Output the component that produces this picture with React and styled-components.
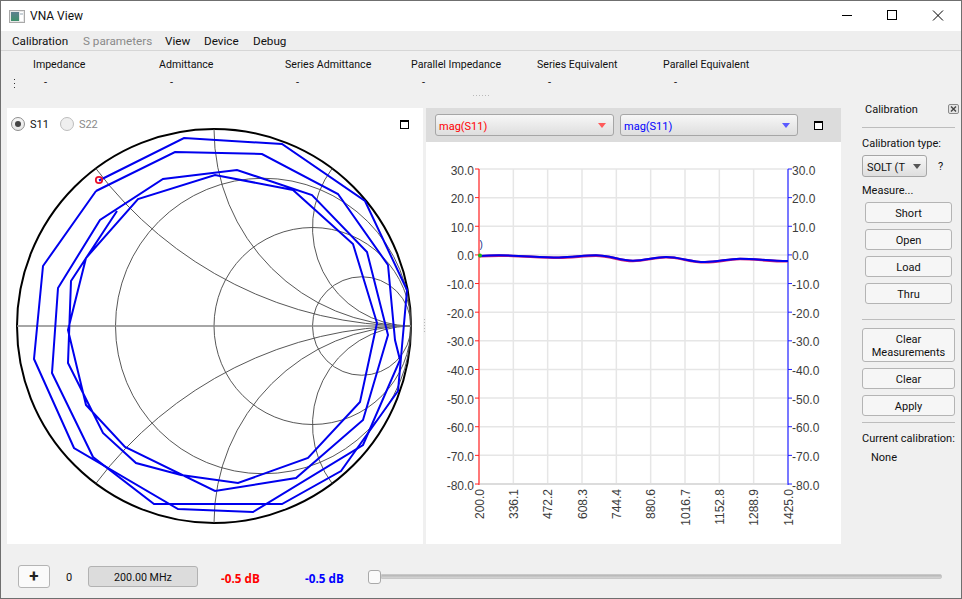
import React from "react";
import styled, { createGlobalStyle } from "styled-components";

const Global = createGlobalStyle`
  html, body { margin: 0; padding: 0; background: #f0f0f0; }
  body { font-family: Roboto, "Liberation Sans", sans-serif; font-size: 11px; color: #111; }
`;

const Win = styled.div`
  box-sizing: border-box; width: 962px; height: 599px; border: 1px solid #6f6f6f;
  background: #f0f0f0; display: flex; flex-direction: column; overflow: hidden;
`;
const TitleBar = styled.div`
  height: 30px; flex: none; background: #fff; display: flex; align-items: center; padding-left: 8px;
`;
const Title = styled.span`margin-left: 5px; font-size: 12px; flex: 1;`;
const WinBtn = styled.svg`width: 46px; height: 30px; display: block; flex: none;`;
const MenuBar = styled.div`
  height: 19px; flex: none; background: #eeeeee; border-bottom: 1px solid #d6d6d6; padding-left: 11px;
  display: grid; grid-template-columns: 71px 82px 39px 49px 1fr; align-items: center; font-size: 11.7px;
`;
const MenuItem = styled.span`color: ${p => (p.$off ? "#8a8a8a" : "#111")};`;
const Workspace = styled.div`flex: 1; display: flex; min-height: 0;`;
const LeftCol = styled.div`width: 840px; flex: none; display: flex; flex-direction: column;`;
const InfoBar = styled.div`height: 37px; flex: none; padding: 5px 0 0 13px; box-sizing: content-box; display: flex; font-size: 10.6px;`;
const Grip = styled.div`
  width: 1px; height: 10px; margin: 23px 18px 0 0;
  background: repeating-linear-gradient(180deg, #333 0 1px, transparent 1px 4px);
`;
const InfoCol = styled.div`width: 126px; flex: none; line-height: 18px;`;
const InfoValue = styled.div`padding-left: 11px; line-height: 18px; font-size: 11px;`;
const HDots = styled.div`
  width: 17px; height: 1px; margin: 0 0 12px 472px; flex: none;
  background: repeating-linear-gradient(90deg, #b9b9b9 0 1px, transparent 1px 3px);
`;
const Panes = styled.div`height: 436px; flex: none; display: flex; padding-left: 6px;`;
const LeftPane = styled.div`position: relative; width: 416px; flex: none; background: #fff;`;
const PaneChart = styled.svg`display: block;`;
const SmithHead = styled.div`
  position: absolute; top: 9px; left: 4px; right: 14px; display: flex; align-items: center;
`;
const Radio = styled.span`
  box-sizing: border-box; width: 14px; height: 14px; border-radius: 50%; flex: none;
  border: 1px solid ${p => (p.$off ? "#bdbdbd" : "#8e8e8e")};
  background: ${p => (p.$off ? "#efefef" : "linear-gradient(#f6f6f6,#e6e6e6)")};
  display: flex; align-items: center; justify-content: center;
  &::after { content: ""; width: 6px; height: 6px; border-radius: 50%; background: ${p => (p.$off ? "transparent" : "#444")}; }
`;
const RadioText = styled.span`
  margin: 0 11px 0 5px; padding-top: 1px; color: ${p => (p.$off ? "#8a8a8a" : "#111")};
`;
const MaxIcon = styled.span`
  box-sizing: border-box; display: block; width: 9px; height: 9px; flex: none;
  border: 1px solid #000; border-top-width: 2px; background: #fff;
  margin: ${p => p.$m || "0"};
`;
const Spacer = styled.div`flex: 1;`;
const VSplit = styled.div`width: 3px; flex: none; display: flex; justify-content: center; padding-top: 211px; box-sizing: border-box;`;
const VDots = styled.div`
  width: 1px; height: 13px;
  background: repeating-linear-gradient(180deg, #b9b9b9 0 1px, transparent 1px 3px);
`;
const RightPane = styled.div`width: 415px; flex: none; background: #fff; display: flex; flex-direction: column;`;
const RightHead = styled.div`
  height: 34px; flex: none; background: #dcdcdc; box-sizing: border-box; padding: 6px 0 0 9px;
  display: flex; align-items: flex-start;
`;
const ComboText = styled.span`padding-top: 2px;`;
const Combo = styled.div`
  box-sizing: border-box; height: 22px; width: ${p => p.$w}; flex: none;
  margin-left: ${p => p.$ml || "0"}; padding: 0 ${p => p.$pr || "7px"} 0 ${p => p.$pl || "3px"};
  border: 1px solid #a6a6a6; border-radius: 3px;
  background: linear-gradient(#f7f7f7, #dedede);
  display: flex; align-items: center; justify-content: space-between;
  color: ${p => p.$color || "#111"};
  &::after {
    content: ""; width: 0; height: 0; border: 4px solid transparent; border-bottom: 0;
    border-top: 5px solid ${p => p.$arrow || "#555"};
  }
`;
const Dock = styled.div`flex: 1; box-sizing: border-box; padding: 53px 6px 0 21px; display: flex; flex-direction: column;`;
const DockHead = styled.div`display: flex; align-items: center; height: 10px; padding-left: 3px; justify-content: space-between; margin-right: -4px;`;
const DockClose = styled.svg`width: 11px; height: 10px; display: block;`;
const Sep = styled.div`height: 1px; background: #bdbdbd; flex: none; margin: ${p => p.$m};`;
const DockLabel = styled.div`line-height: 15px; padding-top: 1px; margin: ${p => p.$m || "0"};`;
const TypeRow = styled.div`display: flex; align-items: center; margin-top: 4px;`;
const Help = styled.span`margin-left: 11px;`;
const Btn = styled.div`
  box-sizing: border-box; flex: none; display: flex; align-items: center; justify-content: center; text-align: center;
  height: ${p => p.$h || "21px"}; margin: ${p => p.$m || "0"}; padding-top: 2px;
  border: 1px solid #b4b4b4; border-radius: 3px; background: #f6f6f6; line-height: 13px; color: #111;
`;
const Footer = styled.div`
  height: 54px; flex: none; box-sizing: border-box; padding: 21px 19px 0 17px; display: flex; align-items: flex-start;
`;
const PlusBtn = styled(Btn)`width: 32px; height: 23px; padding-top: 0; font-size: 17px; font-weight: 700; background: #fafafa; color: #222;`;
const Cell = styled.div`height: 23px; display: flex; align-items: center; flex: none; width: ${p => p.$w}; padding: 2px 0 0 ${p => p.$pl || "0"}; box-sizing: border-box;`;
const Freq = styled.div`
  box-sizing: border-box; width: 110px; height: 21px; margin-top: 1px; padding-top: 1px; flex: none; display: flex; align-items: center; justify-content: center;
  background: #dcdcdc; border: 1px solid #b2b2b2; border-radius: 3px; font-size: 10.7px;
`;
const Db = styled(Cell)`font-family: "Open Sans", sans-serif; font-weight: 700; font-size: 11.7px; color: ${p => p.$color}; margin-left: ${p => p.$ml || 0};`;
const Slider = styled.div`flex: 1; height: 23px; display: flex; align-items: center;`;
const Handle = styled.div`
  box-sizing: border-box; width: 13px; height: 14px; flex: none; background: #fafafa; border: 1px solid #a9a9a9; border-radius: 3px;
`;
const Groove = styled.div`
  flex: 1; height: 5px; background: linear-gradient(#b4b4b4, #d6d6d6); border: 1px solid #c8c8c8; box-sizing: border-box; border-radius: 0 2px 2px 0;
`;

const CX = 214, CY = 326, R = 197;
const pts = a => a.map(p => p.join(",")).join(" ");
const loopA = [[99,180.5],[184,138],[282,144],[365,201],[407,290],[398,391],[341,471],[282,504],[154,504],[93,457],[52,373],[58,288],[100,220],[163,179],[237,170],[312,195],[367,252],[388,335],[363,420],[296,478],[215,491],[125,447],[86,405],[68,330],[86,258],[138,199],[215,175],[293,190],[353,244],[377,323],[360,402],[308,458],[238,483],[181,475],[136,463],[103,433],[68,363],[71,281],[117,211]];
const loopB = [[96,191],[175,152],[262,154],[338,194],[388,265],[395,340],[400,360],[363,445],[253,512],[178,509],[74,448],[34,359],[43,266],[96,191]];

const arc = (x, up) => {
  const d = x * x + 1;
  const sx = CX + R * (x * x - 1) / d;
  const sy = CY + (up ? -1 : 1) * R * 2 * x / d;
  return `M${sx} ${sy} A${R / x} ${R / x} 0 0 ${up ? 0 : 1} ${CX + R} ${CY}`;
};

function Smith() {
  return (
    <PaneChart width="416" height="436" viewBox="7 108 416 436">
      <circle cx={CX} cy={CY} r={R} fill="none" stroke="#000" strokeWidth="2" />
      <g fill="none" stroke="#444" strokeWidth="0.9">
        {[1 / 3, 1, 3].map(r => {
          const rr = R / (r + 1);
          return <circle key={r} cx={CX + R - rr} cy={CY} r={rr} />;
        })}
        {[0.5, 1, 2].flatMap(x => [<path key={x + "u"} d={arc(x, true)} />, <path key={x + "d"} d={arc(x, false)} />])}
      </g>
      <line x1={CX - R} x2={CX + R} y1={CY} y2={CY} stroke="#888" strokeWidth="1.4" />
      <polyline points={pts(loopB)} fill="none" stroke="#0000ee" strokeWidth="2" />
      <polyline points={pts(loopA)} fill="none" stroke="#0000ee" strokeWidth="2" />
      <circle cx="99" cy="180" r="3.2" fill="none" stroke="#e8102a" strokeWidth="1.8" />
    </PaneChart>
  );
}

const yLabels = ["30.0","20.0","10.0","0.0","-10.0","-20.0","-30.0","-40.0","-50.0","-60.0","-70.0","-80.0"];
const xLabels = ["200.0","336.1","472.2","608.3","744.4","880.6","1016.7","1152.8","1288.9","1425.0"];
const Y0 = 169, YS = 315 / 11, X0 = 479, XS = 309 / 9;
const curve = "M479 256 C486 255.5 492 255.3 499 255.3 C520 255.3 540 257.4 559 257.4 C572 257.4 584 255.3 596 255.3 C610 255.3 620 260.7 633 260.7 C645 260.7 655 257 666 257 C680 257 690 262 705 262 C718 262 728 258.7 740 258.7 C755 258.7 770 261 788 261";

function Rect() {
  return (
    <PaneChart width="415" height="402" viewBox="426 142 415 402" fontFamily="'Liberation Sans', sans-serif" fontSize="12">
      <g stroke="#e6e6e6" strokeWidth="1.5">
        {yLabels.map((_, i) => <line key={i} x1={X0} x2="788" y1={Y0 + i * YS} y2={Y0 + i * YS} />)}
        {xLabels.map((_, i) => <line key={i} x1={X0 + i * XS} x2={X0 + i * XS} y1={Y0} y2="484" />)}
      </g>
      <line x1={X0} x2="788" y1="484" y2="484" stroke="#dcdcdc" strokeWidth="2" />
      <line x1={X0} x2={X0} y1={Y0} y2="485" stroke="#ff7878" strokeWidth="2" />
      <line x1="788" x2="788" y1={Y0} y2="485" stroke="#7878ff" strokeWidth="2" />
      {yLabels.map((t, i) => {
        const y = Y0 + i * YS;
        return (
          <g key={t}>
            <line x1="475" x2={X0} y1={y} y2={y} stroke="#ff2020" />
            <line x1="788" x2="792" y1={y} y2={y} stroke="#2020ff" />
            <text x="474" y={y + 5.5} textAnchor="end" fill="#3c3c3c">{t}</text>
            <text x="792" y={y + 5.5} fill="#3c3c3c">{t}</text>
          </g>
        );
      })}
      {xLabels.map((t, i) => {
        const x = X0 + i * XS;
        return <text key={t} transform={`translate(${x + 4.5} 489) rotate(-90)`} textAnchor="end" fill="#3c3c3c">{t}</text>;
      })}
      <path d={curve} fill="none" stroke="#d0207a" strokeWidth="2.6" transform="translate(0 0.3)" />
      <path d={curve} fill="none" stroke="#0000ee" strokeWidth="2" />
      <circle cx="480" cy="255.5" r="2" fill="#18b818" />
      <text x="479.5" y="248" fontSize="10" fill="#12308a">)</text>
    </PaneChart>
  );
}

const infos = ["Impedance","Admittance","Series Admittance","Parallel Impedance","Series Equivalent","Parallel Equivalent"];
const menus = ["Calibration","S parameters","View","Device","Debug"];

export default function App() {
  return (
    <Win>
      <Global />
      <TitleBar>
        <svg width="16" height="15" viewBox="0 0 16 15">
          <rect x="0.5" y="1.5" width="15" height="12" fill="#e8e8e8" stroke="#a9a9a9" />
          <defs><linearGradient id="ig" x1="0" y1="0" x2="0" y2="1"><stop offset="0" stopColor="#5d7f8f" /><stop offset="1" stopColor="#3d8f6a" /></linearGradient></defs>
          <rect x="2" y="3" width="8" height="9" fill="url(#ig)" />
          <rect x="11" y="3" width="3" height="9" fill="#fff" />
          <rect x="11" y="4" width="3" height="2" fill="#c9d2d8" />
        </svg>
        <Title>VNA View</Title>
        <WinBtn viewBox="0 0 46 30"><line x1="19" x2="29" y1="14.5" y2="14.5" stroke="#000" /></WinBtn>
        <WinBtn viewBox="0 0 46 30"><rect x="18.5" y="9.5" width="9" height="9" fill="none" stroke="#000" /></WinBtn>
        <WinBtn viewBox="0 0 46 30"><path d="M18 9.5 L28 19.5 M28 9.5 L18 19.5" stroke="#000" fill="none" /></WinBtn>
      </TitleBar>
      <MenuBar>
        {menus.map(m => <MenuItem key={m} $off={m === "S parameters"}>{m}</MenuItem>)}
      </MenuBar>
      <Workspace>
        <LeftCol>
          <InfoBar>
            <Grip />
            {infos.map(t => (
              <InfoCol key={t}>
                {t}
                <InfoValue>-</InfoValue>
              </InfoCol>
            ))}
          </InfoBar>
          <Spacer />
          <HDots />
          <Panes>
            <LeftPane>
              <Smith />
              <SmithHead>
                <Radio />
                <RadioText>S11</RadioText>
                <Radio $off />
                <RadioText $off>S22</RadioText>
                <Spacer />
                <MaxIcon />
              </SmithHead>
            </LeftPane>
            <VSplit><VDots /></VSplit>
            <RightPane>
              <RightHead>
                <Combo $w="179px" $color="#ff0000" $arrow="#ff5a5a"><ComboText>mag(S11)</ComboText></Combo>
                <Combo $w="178px" $ml="6px" $color="#0000ff" $arrow="#5a5aff"><ComboText>mag(S11)</ComboText></Combo>
                <MaxIcon $m="7px 0 0 16px" />
              </RightHead>
              <Rect />
            </RightPane>
          </Panes>
        </LeftCol>
        <Dock>
          <DockHead>
            <span>Calibration</span>
            <DockClose viewBox="0 0 11 10">
              <rect x="0.5" y="0.5" width="10" height="9" rx="1.5" fill="#e4e4e4" stroke="#8a8a8a" />
              <path d="M3 2.5 L8 7.5 M8 2.5 L3 7.5" stroke="#444" strokeWidth="1.4" />
            </DockClose>
          </DockHead>
          <Sep $m="13px 0 0" />
          <DockLabel $m="7px 0 0">Calibration type:</DockLabel>
          <TypeRow>
            <Combo $w="65px" $pl="4px" $pr="5px"><ComboText>SOLT (T</ComboText></Combo>
            <Help>?</Help>
          </TypeRow>
          <DockLabel $m="5px 0 0">Measure...</DockLabel>
          <Btn $m="4px 3px 0">Short</Btn>
          <Btn $m="6px 3px 0">Open</Btn>
          <Btn $m="6px 3px 0">Load</Btn>
          <Btn $m="6px 3px 0">Thru</Btn>
          <Sep $m="15px 0 0" />
          <Btn $h="34px" $m="8px 0 0">Clear<br />Measurements</Btn>
          <Btn $m="6px 0 0">Clear</Btn>
          <Btn $m="6px 0 0">Apply</Btn>
          <Sep $m="6px 0 0" />
          <DockLabel $m="7px 0 0">Current calibration:</DockLabel>
          <DockLabel $m="3px 0 0 9px">None</DockLabel>
        </Dock>
      </Workspace>
      <Footer>
        <PlusBtn>+</PlusBtn>
        <Cell $w="38px" $pl="16px">0</Cell>
        <Freq>200.00 MHz</Freq>
        <Db $w="84px" $ml="23px" $color="#ff0000">-0.5 dB</Db>
        <Db $w="63px" $color="#0000ff">-0.5 dB</Db>
        <Slider><Handle /><Groove /></Slider>
      </Footer>
    </Win>
  );
}
